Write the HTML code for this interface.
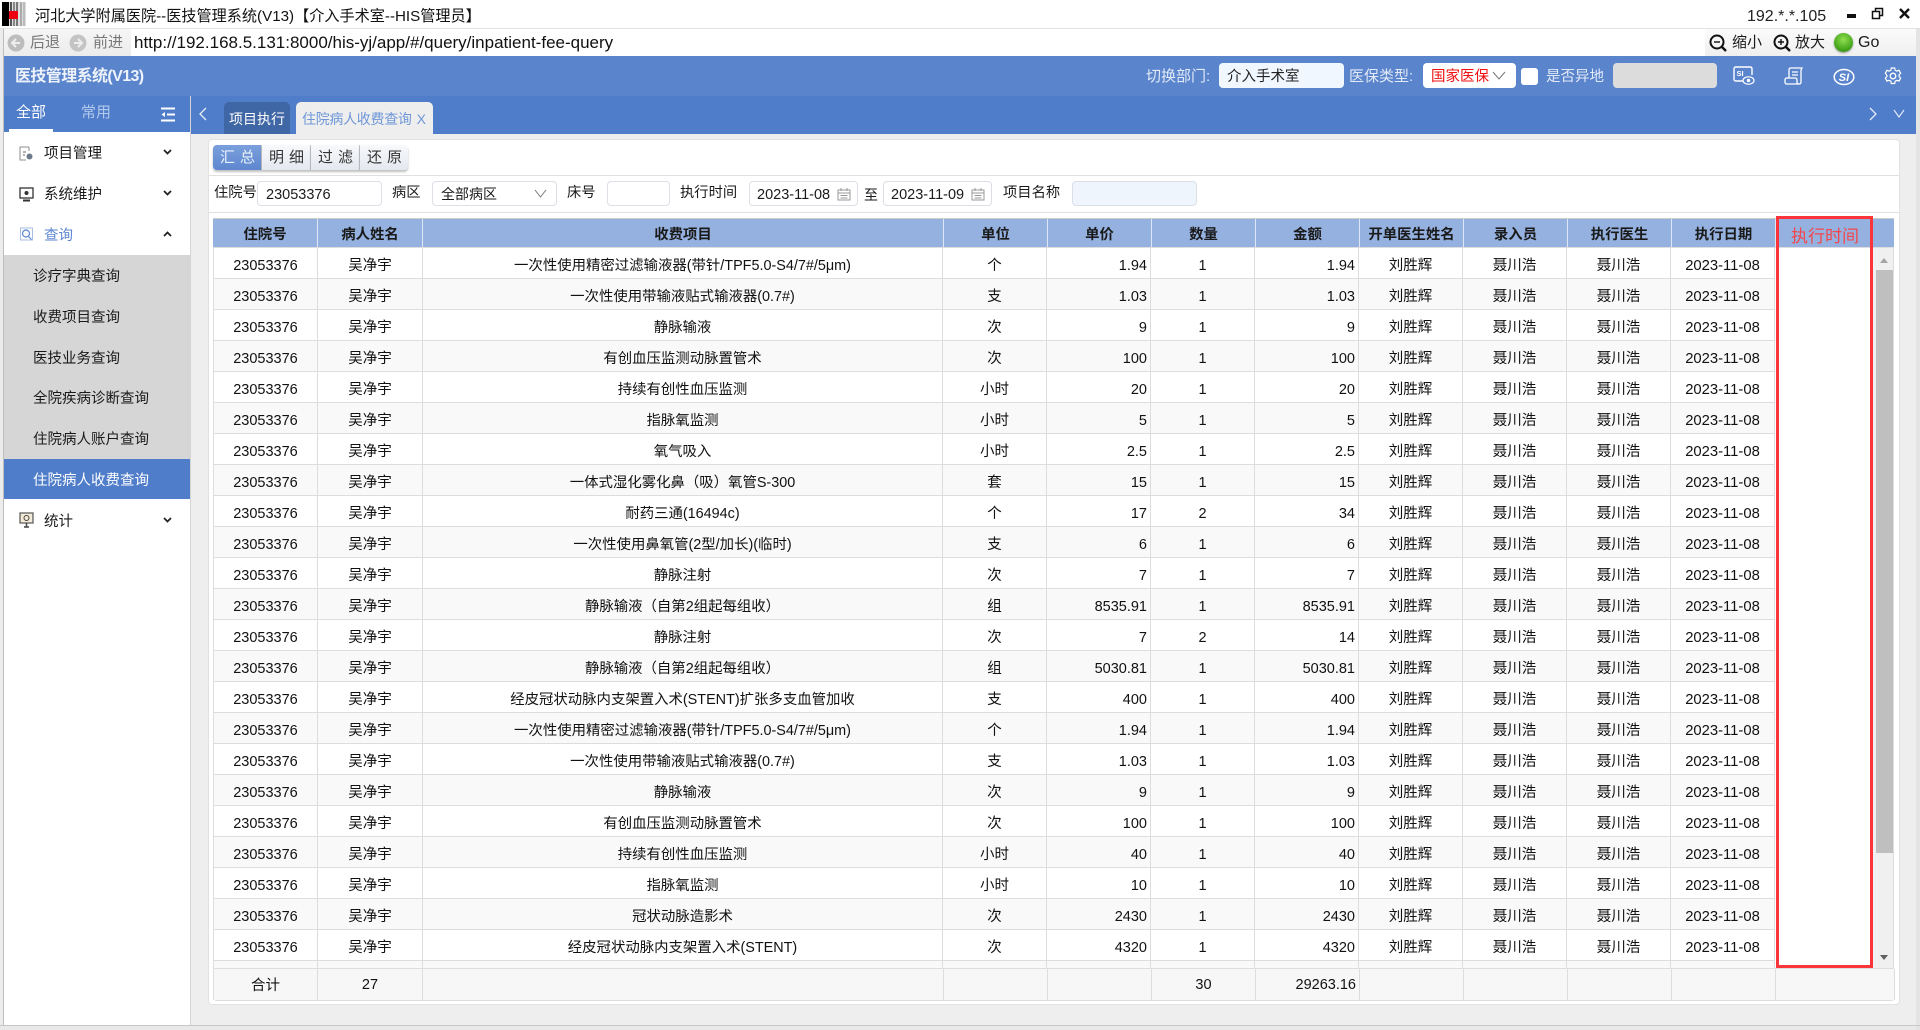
<!DOCTYPE html>
<html lang="zh"><head><meta charset="utf-8"><title>医技管理系统</title>
<style>
*{box-sizing:border-box}
html,body{margin:0;padding:0;width:1920px;height:1030px;overflow:hidden;background:#e9e9e9;font:14px "Liberation Sans","Noto Sans CJK SC",sans-serif;color:#1a1a1a}
.a{position:absolute;white-space:nowrap}
.t{position:absolute;white-space:nowrap;line-height:20px;height:20px}
.inp{position:absolute;background:#fff;border:1px solid #dcdfe6;border-radius:4px;height:25px;line-height:25px;white-space:nowrap}
.btn{position:absolute;top:145px;height:25px;line-height:26px;text-align:center;letter-spacing:5px;padding-left:6px;font-size:15px;color:#333;background:linear-gradient(#f8f9fb,#e4e8ef);border-right:1px solid #c4c8ce;box-shadow:0 2px 2px rgba(0,0,0,.25)}
.side{position:absolute;left:33px;width:156px;line-height:20px;height:20px;white-space:nowrap;font-size:14.5px}
table{border-collapse:separate;border-spacing:0;table-layout:fixed;position:absolute}
#b td{height:31px;padding:5px 0 0;border-right:1px solid #ddd;border-bottom:1px solid #ddd;text-align:center;font-size:14.5px;line-height:20px;background:#fff;white-space:nowrap;color:#111}
#b td:first-child{border-left:1px solid #ddd}
#b tr:nth-child(even) td{background:#f9f9f9}
#b td:nth-child(3){font-size:14.4px}
#b td:nth-child(11){font-size:14.8px}
#b td:nth-child(5),#b td:nth-child(7){text-align:right;padding-right:3px}
#h td{height:29px;padding:0;background:#95b1e0;border-right:1px solid #dfe7f5;text-align:center;font-weight:bold;font-size:14.4px;color:#1a1a1a;white-space:nowrap}
#f td{height:31px;padding:0;background:#f7f7f7;border-right:1px solid #ddd;text-align:center;font-size:14.5px;color:#111}
#f td:first-child{border-left:1px solid #ddd}
</style></head><body>

<!-- window chrome -->
<div class="a" style="left:0;top:0;width:1920px;height:28px;background:#fff;border-bottom:0"></div>
<div class="a" style="left:0;top:28px;width:1920px;height:1px;background:#e3e3e3"></div>
<div class="a" style="left:0;top:29px;width:1920px;height:27px;background:#fff"></div>
<div class="a" style="left:0;top:29px;width:4px;height:996px;background:#ececec;border-right:1px solid #bdbdbd"></div>
<div class="a" style="left:1916px;top:29px;width:4px;height:1001px;background:#e4e4e4"></div>

<svg class="a" style="left:2px;top:2px" width="24" height="24" viewBox="0 0 24 24">
<rect width="7" height="24" fill="#000"/><rect x="7" width="17" height="24" fill="#ddd"/>
<rect x="8" width="2" height="24" fill="#555"/><rect x="11" width="2" height="24" fill="#888"/><rect x="14" width="2" height="24" fill="#777"/><rect x="18" width="2" height="24" fill="#aaa"/><rect x="21" width="2" height="24" fill="#bbb"/>
<rect x="7" y="9" width="9" height="8" fill="#ee0011"/></svg>
<div class="t" style="left:35px;top:7px;font-size:15.15px;color:#111">河北大学附属医院--医技管理系统(V13)【介入手术室--HIS管理员】</div>
<div class="t" style="left:1747px;top:7px;font-size:16px;color:#222">192.*.*.105</div>
<div class="a" style="left:1847px;top:14px;width:9px;height:4px;background:#111"></div>
<svg class="a" style="left:1871px;top:7px" width="13" height="13" viewBox="0 0 13 13"><path d="M1.5 4.5h7v7h-7zM4.500 4.500v-3h7v7h-3" fill="none" stroke="#111" stroke-width="1.5"/></svg>
<svg class="a" style="left:1899px;top:8px" width="11" height="11" viewBox="0 0 11 11"><path d="M1 1l9 9M10 1l-9 9" stroke="#111" stroke-width="2.4"/></svg>

<!-- address bar -->
<div class="a" style="left:4px;top:29px;width:127px;height:27px;background:linear-gradient(#f6f6f6,#ececec)"></div>
<svg class="a" style="left:6px;top:33px" width="20" height="20" viewBox="0 0 20 20"><circle cx="10" cy="10" r="8.5" fill="#bdbdbd"/><path d="M14 10H6.500M10 6l-4 4 4 4" fill="none" stroke="#eee" stroke-width="2"/></svg>
<div class="t" style="left:30px;top:33px;font-size:15px;color:#777">后退</div>
<svg class="a" style="left:68px;top:33px" width="20" height="20" viewBox="0 0 20 20"><circle cx="10" cy="10" r="8.5" fill="#c4c4c4"/><path d="M6 10h7.500M10 6l4 4-4 4" fill="none" stroke="#eee" stroke-width="2"/></svg>
<div class="t" style="left:93px;top:33px;font-size:15px;color:#777">前进</div>
<div class="t" style="left:134px;top:33px;font-size:17px;color:#111">http://192.168.5.131:8000/his-yj/app/#/query/inpatient-fee-query</div>
<div class="a" style="left:1705px;top:29px;width:211px;height:27px;background:linear-gradient(#fbfbfb,#efefef)"></div>
<svg class="a" style="left:1708px;top:33px" width="20" height="20" viewBox="0 0 20 20"><circle cx="9" cy="9" r="6.500" fill="none" stroke="#111" stroke-width="2"/><path d="M14 14l4 4" stroke="#111" stroke-width="2.4"/><path d="M6 9h6" stroke="#111" stroke-width="1.4"/></svg>
<div class="t" style="left:1732px;top:33px;font-size:15px">缩小</div>
<svg class="a" style="left:1772px;top:33px" width="20" height="20" viewBox="0 0 20 20"><circle cx="9" cy="9" r="6.500" fill="none" stroke="#111" stroke-width="2"/><path d="M14 14l4 4" stroke="#111" stroke-width="2.4"/><path d="M6 9h6M9 6v6" stroke="#111" stroke-width="1.4"/></svg>
<div class="t" style="left:1795px;top:33px;font-size:15px">放大</div>
<div class="a" style="left:1834px;top:33px;width:19px;height:19px;border-radius:50%;background:radial-gradient(circle at 50% 35%,#8fe04f,#3fa018 70%,#2f7a10);box-shadow:0 1px 2px rgba(0,0,0,.4)"></div>
<div class="t" style="left:1858px;top:33px;font-size:16px">Go</div>

<!-- header -->
<div class="a" style="left:4px;top:56px;width:1912px;height:40px;background:#5a84cc"></div>
<div class="t" style="left:15px;top:67px;font-size:16px;font-weight:bold;color:#eef3fb;letter-spacing:-.6px">医技管理系统(V13)</div>
<div class="t" style="left:1146px;top:67px;font-size:15px;color:#e3eaf7">切换部门:</div>
<div class="a" style="left:1219px;top:63px;width:125px;height:25px;line-height:28px;padding-left:8px;background:#f0f7ff;border-radius:4px;color:#222;font-size:14.5px">介入手术室</div>
<div class="t" style="left:1349px;top:67px;font-size:15px;color:#e3eaf7">医保类型:</div>
<div class="a" style="left:1423px;top:63px;width:93px;height:25px;line-height:28px;padding-left:8px;background:#fff;border-radius:4px;color:#f01010;font-size:14.5px">国家医保</div>
<svg class="a" style="left:1492px;top:71px" width="14" height="10" viewBox="0 0 14 10"><path d="M1 1l6 7 6-7" fill="none" stroke="#777" stroke-width="1"/></svg>
<div class="a" style="left:1521px;top:68px;width:17px;height:17px;background:#fff;border-radius:3px"></div>
<div class="t" style="left:1546px;top:67px;font-size:14.5px;color:#e3eaf7">是否异地</div>
<div class="a" style="left:1613px;top:63px;width:104px;height:25px;background:#dcdcdc;border-radius:4px"></div>
<svg class="a" style="left:1733px;top:66px" width="22" height="20" viewBox="0 0 22 20"><path d="M10 15H3q-2 0-2-2V3q0-2 2-2h14q2 0 2 2v6" fill="none" stroke="#fff" stroke-width="1.4"/><text x="3.500" y="10" font-size="7.500" font-weight="bold" fill="#fff" font-family="Liberation Sans">SI</text><ellipse cx="15.500" cy="14.500" rx="5.500" ry="3.700" fill="none" stroke="#fff" stroke-width="1.200"/><circle cx="15.500" cy="14.500" r="1.700" fill="#fff"/></svg>
<svg class="a" style="left:1784px;top:67px" width="20" height="18" viewBox="0 0 20 18"><path d="M5 11V3q0-2 2-2h11l-1 2v12q0 2-2 2H3q-2 0-2-2v-2q0-2 2-2h8q2 0 2 2v2q0 2 2 2M8 5h6M8 8h6" fill="none" stroke="#fff" stroke-width="1.300"/></svg>
<svg class="a" style="left:1833px;top:68px" width="22" height="18" viewBox="0 0 22 18"><ellipse cx="11" cy="9" rx="9.800" ry="7.500" fill="none" stroke="#fff" stroke-width="1.500"/><text x="5.800" y="13" font-size="11" font-weight="bold" font-style="italic" fill="#fff" font-family="Liberation Sans">SI</text></svg>
<svg class="a" style="left:1884px;top:67px" width="18" height="18" viewBox="0 0 18 18"><path d="M7.300 1h3.400l.5 2.200 1.700.9 2.100-.8 1.700 3-1.600 1.500v1.800l1.600 1.500-1.700 3-2.100-.8-1.700.9-.5 2.300H7.300l-.5-2.300-1.700-.9-2.100.8-1.700-3 1.600-1.500V8.300L1.300 6.300l1.700-3 2.100.8 1.700-.9z" fill="none" stroke="#fff" stroke-width="1.200"/><circle cx="9" cy="9" r="2.800" fill="none" stroke="#fff" stroke-width="1.300"/></svg>

<!-- tab row -->
<div class="a" style="left:4px;top:96px;width:186px;height:36px;background:#4f7dc9"></div>
<div class="a" style="left:191px;top:96px;width:1725px;height:38px;background:#4f7dc9"></div>
<div class="t" style="left:16px;top:103px;font-size:15px;color:#fff">全部</div>
<div class="t" style="left:81px;top:103px;font-size:15px;color:#b3c9ec">常用</div>
<div class="a" style="left:9px;top:129px;width:44px;height:3px;background:#fff"></div>
<svg class="a" style="left:161px;top:107px" width="14" height="15" viewBox="0 0 14 15"><path d="M0 1.500h14M6 7.500h8M0 13.500h14" stroke="#fff" stroke-width="2"/><path d="M4 5L0.500 7.500 4 10z" fill="#fff"/></svg>
<svg class="a" style="left:198px;top:107px" width="10" height="14" viewBox="0 0 10 14"><path d="M8 1L2 7l6 6" fill="none" stroke="#e6edf8" stroke-width="1.300"/></svg>
<div class="a" style="left:224px;top:102px;width:66px;height:32px;background:#3f66a5;border-radius:5px 5px 0 0;color:#fff;text-align:center;line-height:34px">项目执行</div>
<div class="a" style="left:296px;top:102px;width:137px;height:32px;background:#eee;border-radius:5px 5px 0 0;color:#6f97d8;line-height:34px;padding-left:6px;letter-spacing:-.3px">住院病人收费查询<span style="margin-left:5px">X</span></div>
<svg class="a" style="left:1868px;top:107px" width="10" height="14" viewBox="0 0 10 14"><path d="M2 1l6 6-6 6" fill="none" stroke="#e6edf8" stroke-width="1.300"/></svg>
<svg class="a" style="left:1893px;top:109px" width="12" height="10" viewBox="0 0 12 10"><path d="M1 1l5 7 5-7" fill="none" stroke="#e6edf8" stroke-width="1.100"/></svg>

<!-- sidebar -->
<div class="a" style="left:4px;top:132px;width:186px;height:893px;background:#fff"></div>
<div class="a" style="left:190px;top:96px;width:1px;height:929px;background:#d4d4d4"></div>
<div class="a" style="left:4px;top:255px;width:186px;height:204px;background:#d6d6d6"></div>
<div class="a" style="left:4px;top:459px;width:186px;height:40px;background:#4f7dc9"></div>

<svg class="a" style="left:19px;top:146px" width="15" height="15" viewBox="0 0 15 15"><path d="M10 1H1v13h6M10 1v4" fill="none" stroke="#8d8d8d" stroke-width="1"/><circle cx="10.500" cy="10.500" r="3" fill="#6c7a8c"/><path d="M4 6h3M4 9h2" stroke="#666"/></svg>
<div class="side" style="left:44px;top:144px">项目管理</div>
<svg class="a" style="left:163px;top:149px" width="9" height="7" viewBox="0 0 9 7"><path d="M1 1l3.500 3.500L8 1" fill="none" stroke="#222" stroke-width="1.800"/></svg>

<svg class="a" style="left:19px;top:187px" width="15" height="15" viewBox="0 0 15 15"><rect x="1" y="1" width="13" height="10" fill="none" stroke="#333" stroke-width="1.300"/><circle cx="7.500" cy="6" r="2" fill="#333"/><path d="M4 13.500h7" stroke="#333" stroke-width="2"/></svg>
<div class="side" style="left:44px;top:185px">系统维护</div>
<svg class="a" style="left:163px;top:190px" width="9" height="7" viewBox="0 0 9 7"><path d="M1 1l3.500 3.500L8 1" fill="none" stroke="#222" stroke-width="1.800"/></svg>

<svg class="a" style="left:19px;top:227px" width="15" height="15" viewBox="0 0 15 15"><path d="M1.500 1h12v12h-12z" fill="none" stroke="#a8bee6"/><circle cx="7" cy="6.500" r="3.500" fill="none" stroke="#5c86d0" stroke-width="1.200"/><path d="M9.500 9.500l3 3" stroke="#5c86d0" stroke-width="1.200"/></svg>
<div class="side" style="left:44px;top:226px;color:#5c86d0">查询</div>
<svg class="a" style="left:163px;top:231px" width="9" height="7" viewBox="0 0 9 7"><path d="M1 5l3.500-3.500L8 5" fill="none" stroke="#222" stroke-width="1.800"/></svg>

<div class="side" style="top:267px">诊疗字典查询</div>
<div class="side" style="top:308px">收费项目查询</div>
<div class="side" style="top:349px">医技业务查询</div>
<div class="side" style="top:389px">全院疾病诊断查询</div>
<div class="side" style="top:430px">住院病人账户查询</div>
<div class="side" style="top:471px;color:#fff">住院病人收费查询</div>

<svg class="a" style="left:19px;top:512px" width="15" height="16" viewBox="0 0 15 16"><rect x="1" y="1" width="13" height="10" fill="#f3ead8" stroke="#555" stroke-width="1.200"/><circle cx="7.500" cy="6" r="2.500" fill="none" stroke="#444"/><path d="M7.500 11v4M5 15h5" stroke="#444" stroke-width="1.500"/></svg>
<div class="side" style="left:44px;top:510px;padding-top:2px;height:22px">统计</div>
<svg class="a" style="left:163px;top:517px" width="9" height="7" viewBox="0 0 9 7"><path d="M1 1l3.500 3.500L8 1" fill="none" stroke="#222" stroke-width="1.800"/></svg>

<!-- main -->
<div class="a" style="left:191px;top:134px;width:1725px;height:891px;background:#eee"></div>
<div class="a" style="left:0;top:1025px;width:1920px;height:1px;background:#c8c8c8"></div>
<div class="a" style="left:208px;top:139px;width:1692px;height:866px;background:#fff;border:1px solid #e2e2e2;border-radius:4px"></div>
<div class="a" style="left:209px;top:175px;width:1690px;height:1px;background:#e0e0e0"></div>
<div class="a" style="left:209px;top:212px;width:1690px;height:1px;background:#e0e0e0"></div>

<div class="btn" style="left:213px;width:49px;background:linear-gradient(#7ba0dc,#5e87cf);color:#e9f0fb;border-radius:4px 0 0 4px">汇总</div>
<div class="btn" style="left:262px;width:49px">明细</div>
<div class="btn" style="left:311px;width:49px">过滤</div>
<div class="btn" style="left:360px;width:48px;border-radius:0 4px 4px 0;border-right:0">还原</div>

<div class="t" style="left:214px;top:183px;font-size:14.300px">住院号</div>
<div class="inp" style="left:257px;top:181px;width:125px;padding-left:8px;padding-top:1px;font-size:14.500px">23053376</div>
<div class="t" style="left:392px;top:183px;font-size:14.300px">病区</div>
<div class="inp" style="left:432px;top:181px;width:125px;padding-left:8px">全部病区</div>
<svg class="a" style="left:534px;top:189px" width="13" height="10" viewBox="0 0 13 10"><path d="M1 1l5.500 7L12 1" fill="none" stroke="#777" stroke-width="1"/></svg>
<div class="t" style="left:567px;top:183px;font-size:14.300px">床号</div>
<div class="inp" style="left:607px;top:181px;width:63px"></div>
<div class="t" style="left:680px;top:183px;font-size:14.300px">执行时间</div>
<div class="inp" style="left:749px;top:181px;width:109px;padding-left:7px;padding-top:1px;font-size:14.500px">2023-11-08</div>
<svg class="a" style="left:837px;top:187px" width="14" height="14" viewBox="0 0 14 14"><path d="M1 3h12v10H1zM1 6h12M4 1v3M10 1v3M3.500 8.500h7M3.500 11h7" fill="none" stroke="#999"/></svg>
<div class="t" style="left:864px;top:185px">至</div>
<div class="inp" style="left:883px;top:181px;width:109px;padding-left:7px;padding-top:1px;font-size:14.500px">2023-11-09</div>
<svg class="a" style="left:971px;top:187px" width="14" height="14" viewBox="0 0 14 14"><path d="M1 3h12v10H1zM1 6h12M4 1v3M10 1v3M3.500 8.500h7M3.500 11h7" fill="none" stroke="#999"/></svg>
<div class="t" style="left:1003px;top:183px;font-size:14.300px">项目名称</div>
<div class="inp" style="left:1072px;top:181px;width:125px;background:#eef5fd"></div>

<!-- table -->
<div class="a" style="left:213px;top:218px;width:1681px;height:1px;background:#ccc"></div>
<table id="h" style="left:213px;top:219px;width:1681px">
<colgroup><col style="width:105px"><col style="width:105px"><col style="width:521px"><col style="width:104px"><col style="width:104px"><col style="width:104px"><col style="width:104px"><col style="width:104px"><col style="width:104px"><col style="width:104px"><col style="width:104px"><col style="width:118px"></colgroup>
<tr><td>住院号</td><td>病人姓名</td><td>收费项目</td><td>单位</td><td>单价</td><td>数量</td><td>金额</td><td>开单医生姓名</td><td>录入员</td><td>执行医生</td><td>执行日期</td><td style="border-right:0"></td></tr></table>
<div class="a" style="left:213px;top:247px;width:1681px;height:1px;background:#ddd"></div>

<div class="a" style="left:213px;top:248px;width:1660px;height:720px;overflow:hidden;background:#fff">
<table id="b" style="left:0;top:0;width:1562px">
<colgroup><col style="width:105px"><col style="width:105px"><col style="width:520px"><col style="width:104px"><col style="width:104px"><col style="width:104px"><col style="width:104px"><col style="width:104px"><col style="width:104px"><col style="width:104px"><col style="width:104px"></colgroup>
<tr><td>23053376</td><td>吴净宇</td><td>一次性使用精密过滤输液器(带针/TPF5.0-S4/7#/5μm)</td><td>个</td><td>1.94</td><td>1</td><td>1.94</td><td>刘胜辉</td><td>聂川浩</td><td>聂川浩</td><td>2023-11-08</td></tr>
<tr><td>23053376</td><td>吴净宇</td><td>一次性使用带输液贴式输液器(0.7#)</td><td>支</td><td>1.03</td><td>1</td><td>1.03</td><td>刘胜辉</td><td>聂川浩</td><td>聂川浩</td><td>2023-11-08</td></tr>
<tr><td>23053376</td><td>吴净宇</td><td>静脉输液</td><td>次</td><td>9</td><td>1</td><td>9</td><td>刘胜辉</td><td>聂川浩</td><td>聂川浩</td><td>2023-11-08</td></tr>
<tr><td>23053376</td><td>吴净宇</td><td>有创血压监测动脉置管术</td><td>次</td><td>100</td><td>1</td><td>100</td><td>刘胜辉</td><td>聂川浩</td><td>聂川浩</td><td>2023-11-08</td></tr>
<tr><td>23053376</td><td>吴净宇</td><td>持续有创性血压监测</td><td>小时</td><td>20</td><td>1</td><td>20</td><td>刘胜辉</td><td>聂川浩</td><td>聂川浩</td><td>2023-11-08</td></tr>
<tr><td>23053376</td><td>吴净宇</td><td>指脉氧监测</td><td>小时</td><td>5</td><td>1</td><td>5</td><td>刘胜辉</td><td>聂川浩</td><td>聂川浩</td><td>2023-11-08</td></tr>
<tr><td>23053376</td><td>吴净宇</td><td>氧气吸入</td><td>小时</td><td>2.5</td><td>1</td><td>2.5</td><td>刘胜辉</td><td>聂川浩</td><td>聂川浩</td><td>2023-11-08</td></tr>
<tr><td>23053376</td><td>吴净宇</td><td>一体式湿化雾化鼻（吸）氧管S-300</td><td>套</td><td>15</td><td>1</td><td>15</td><td>刘胜辉</td><td>聂川浩</td><td>聂川浩</td><td>2023-11-08</td></tr>
<tr><td>23053376</td><td>吴净宇</td><td>耐药三通(16494c)</td><td>个</td><td>17</td><td>2</td><td>34</td><td>刘胜辉</td><td>聂川浩</td><td>聂川浩</td><td>2023-11-08</td></tr>
<tr><td>23053376</td><td>吴净宇</td><td>一次性使用鼻氧管(2型/加长)(临时)</td><td>支</td><td>6</td><td>1</td><td>6</td><td>刘胜辉</td><td>聂川浩</td><td>聂川浩</td><td>2023-11-08</td></tr>
<tr><td>23053376</td><td>吴净宇</td><td>静脉注射</td><td>次</td><td>7</td><td>1</td><td>7</td><td>刘胜辉</td><td>聂川浩</td><td>聂川浩</td><td>2023-11-08</td></tr>
<tr><td>23053376</td><td>吴净宇</td><td>静脉输液（自第2组起每组收）</td><td>组</td><td>8535.91</td><td>1</td><td>8535.91</td><td>刘胜辉</td><td>聂川浩</td><td>聂川浩</td><td>2023-11-08</td></tr>
<tr><td>23053376</td><td>吴净宇</td><td>静脉注射</td><td>次</td><td>7</td><td>2</td><td>14</td><td>刘胜辉</td><td>聂川浩</td><td>聂川浩</td><td>2023-11-08</td></tr>
<tr><td>23053376</td><td>吴净宇</td><td>静脉输液（自第2组起每组收）</td><td>组</td><td>5030.81</td><td>1</td><td>5030.81</td><td>刘胜辉</td><td>聂川浩</td><td>聂川浩</td><td>2023-11-08</td></tr>
<tr><td>23053376</td><td>吴净宇</td><td>经皮冠状动脉内支架置入术(STENT)扩张多支血管加收</td><td>支</td><td>400</td><td>1</td><td>400</td><td>刘胜辉</td><td>聂川浩</td><td>聂川浩</td><td>2023-11-08</td></tr>
<tr><td>23053376</td><td>吴净宇</td><td>一次性使用精密过滤输液器(带针/TPF5.0-S4/7#/5μm)</td><td>个</td><td>1.94</td><td>1</td><td>1.94</td><td>刘胜辉</td><td>聂川浩</td><td>聂川浩</td><td>2023-11-08</td></tr>
<tr><td>23053376</td><td>吴净宇</td><td>一次性使用带输液贴式输液器(0.7#)</td><td>支</td><td>1.03</td><td>1</td><td>1.03</td><td>刘胜辉</td><td>聂川浩</td><td>聂川浩</td><td>2023-11-08</td></tr>
<tr><td>23053376</td><td>吴净宇</td><td>静脉输液</td><td>次</td><td>9</td><td>1</td><td>9</td><td>刘胜辉</td><td>聂川浩</td><td>聂川浩</td><td>2023-11-08</td></tr>
<tr><td>23053376</td><td>吴净宇</td><td>有创血压监测动脉置管术</td><td>次</td><td>100</td><td>1</td><td>100</td><td>刘胜辉</td><td>聂川浩</td><td>聂川浩</td><td>2023-11-08</td></tr>
<tr><td>23053376</td><td>吴净宇</td><td>持续有创性血压监测</td><td>小时</td><td>40</td><td>1</td><td>40</td><td>刘胜辉</td><td>聂川浩</td><td>聂川浩</td><td>2023-11-08</td></tr>
<tr><td>23053376</td><td>吴净宇</td><td>指脉氧监测</td><td>小时</td><td>10</td><td>1</td><td>10</td><td>刘胜辉</td><td>聂川浩</td><td>聂川浩</td><td>2023-11-08</td></tr>
<tr><td>23053376</td><td>吴净宇</td><td>冠状动脉造影术</td><td>次</td><td>2430</td><td>1</td><td>2430</td><td>刘胜辉</td><td>聂川浩</td><td>聂川浩</td><td>2023-11-08</td></tr>
<tr><td>23053376</td><td>吴净宇</td><td>经皮冠状动脉内支架置入术(STENT)</td><td>次</td><td>4320</td><td>1</td><td>4320</td><td>刘胜辉</td><td>聂川浩</td><td>聂川浩</td><td>2023-11-08</td></tr>
<tr><td></td><td></td><td></td><td></td><td></td><td></td><td></td><td></td><td></td><td></td><td></td></tr>
</table></div>

<!-- scrollbar -->
<div class="a" style="left:1873px;top:248px;width:21px;height:720px;background:#f0f0f0;border-right:1px solid #ddd"></div>
<div class="a" style="left:1876px;top:270px;width:17px;height:583px;background:#bfbfbf"></div>
<div class="a" style="left:1880px;top:258px;width:0;height:0;border-left:4.500px solid transparent;border-right:4.500px solid transparent;border-bottom:5px solid #a5a5a5"></div>
<div class="a" style="left:1880px;top:955px;width:0;height:0;border-left:4.500px solid transparent;border-right:4.500px solid transparent;border-top:5px solid #606060"></div>

<!-- footer -->
<div class="a" style="left:213px;top:968px;width:1681px;height:1px;background:#ddd"></div>
<table id="f" style="left:213px;top:969px;width:1682px;border-bottom:1px solid #ddd;border-radius:0 0 4px 4px">
<colgroup><col style="width:105px"><col style="width:105px"><col style="width:521px"><col style="width:104px"><col style="width:104px"><col style="width:104px"><col style="width:104px"><col style="width:104px"><col style="width:104px"><col style="width:104px"><col style="width:104px"><col style="width:119px"></colgroup>
<tr><td>合计</td><td>27</td><td></td><td></td><td></td><td>30</td><td style="text-align:right;padding-right:3px">29263.16</td><td></td><td></td><td></td><td></td><td></td></tr></table>

<!-- red highlight -->
<div class="a" style="left:1776px;top:216px;width:97px;height:752px;border:3px solid #fb3539"></div>
<div class="t" style="left:1791px;top:227px;font-size:17px;color:#f2474c">执行时间</div>

</body></html>
